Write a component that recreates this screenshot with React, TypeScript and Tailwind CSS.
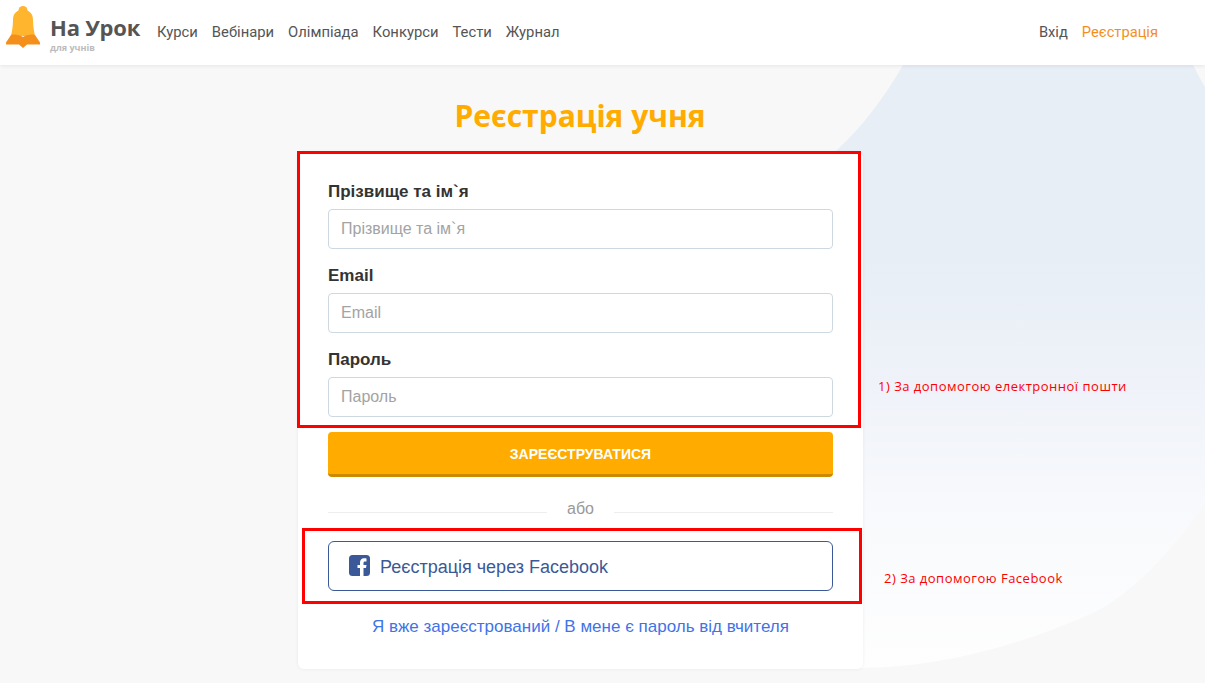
const navItems = ["Курси", "Вебінари", "Олімпіада", "Конкурси", "Тести", "Журнал"];

function Logo() {
  return (
    <svg width="36" height="42" viewBox="0 0 36 42" className="mt-[6px] shrink-0 self-start">
      <circle cx="18" cy="4.500" r="4.500" fill="#ffb52e" />
      <path d="M6 30 C7 25 8 20 8 14 C8 7 12 4 18 4 C24 4 28 7 28 14 C28 20 29 25 30 30 Z" fill="#ffb52e" />
      <path d="M1 36.500 L6 29 C10 28 15 29 18 31 C21 29 26 28 30 29 L35 36.500 L35 38.500 L22 38.500 L18 42 L14 38.500 L1 38.500 Z" fill="#f58f1c" />
    </svg>
  );
}

function Field({ label }: { label: string }) {
  return (
    <div className="flex flex-col">
      <label className="mb-[6px] text-[17px] leading-[23px] font-bold text-[#333333]">{label}</label>
      <input
        placeholder={label}
        className="h-10 w-full rounded-[4px] border border-[#ced8e0] bg-white px-3 text-[16px] text-[#333333] placeholder:text-[#a3a3a3] outline-none"
      />
    </div>
  );
}

export default function App() {
  return (
    <div className="relative h-[683px] w-[1205px] overflow-hidden bg-[#f8f8f8] font-['Liberation_Sans',sans-serif]">
      <svg className="absolute left-0 top-0" width="1205" height="683" viewBox="0 0 1205 683">
        <defs>
          <linearGradient id="blob" x1="0" y1="0" x2="0" y2="1">
            <stop offset="0" stopColor="#e7eef6" />
            <stop offset="0.32" stopColor="#e7eef6" />
            <stop offset="0.555" stopColor="#f0f3f9" />
            <stop offset="0.72" stopColor="#f7f9fc" />
            <stop offset="1" stopColor="#fefefe" />
          </linearGradient>
        </defs>
        <path d="M903 65 C884 98 862 127 837 150 L700 300 L700 668 L860 668 C930 668 1010 650 1093 613 C1135 592 1170 552 1205 505 L1205 87 C1200 79 1197 72 1193 65 Z" fill="url(#blob)" />
      </svg>

      <header className="relative flex h-[65px] items-center bg-white pl-[5px] pr-[47px] shadow-[0_1px_4px_rgba(0,0,0,0.08)]">
        <Logo />
        <div className="ml-[9px] flex w-[97px] flex-col pt-[3px]">
          <span className="font-['Open_Sans',sans-serif] text-[22px] leading-[24px] font-bold tracking-[-0.2px] text-[#555555]">На Урок</span>
          <span className="mt-[3px] font-['Open_Sans',sans-serif] text-[9px] leading-[12px] font-bold text-[#bbbbbb]">для учнів</span>
        </div>
        <nav className="ml-[10px] flex gap-[14px] font-['Roboto',sans-serif] text-[14.800px] text-[#555555]">
          {navItems.map((item) => (
            <a key={item}>{item}</a>
          ))}
        </nav>
        <div className="ml-auto flex gap-[14px] font-['Roboto',sans-serif] text-[14.700px]">
          <a className="text-[#555555]">Вхід</a>
          <a className="text-[#f58f1c]">Реєстрація</a>
        </div>
      </header>

      <main className="relative flex flex-col items-center">
        <h1 className="ml-[-45px] mt-[31px] font-['Open_Sans',sans-serif] text-[30px] leading-[40px] font-bold text-[#ffab00]">
          Реєстрація учня
        </h1>
        <div className="ml-[-44px] mt-[16px] flex h-[517px] w-[565px] flex-col rounded-[6px] bg-white px-[30px] pt-[28px] shadow-[0_0_4px_rgba(0,0,0,0.06)]">
          <div className="flex flex-col gap-[15px]">
            <Field label="Прізвище та ім`я" />
            <Field label="Email" />
            <Field label="Пароль" />
          </div>
          <button className="mt-[15px] h-[45px] w-full rounded-[4px] border-b-[3px] border-[#cc8a00] bg-[#ffab00] pt-[2px] text-[14px] font-bold text-white uppercase">
            Зареєструватися
          </button>
          <div className="mt-[23px] flex items-center">
            <div className="mt-[6px] h-px flex-1 bg-[#eeeeee]" />
            <span className="px-5 text-[16px] leading-[18px] text-[#999999]">або</span>
            <div className="mt-[6px] h-px flex-1 bg-[#eeeeee]" />
          </div>
          <button className="mt-[23px] flex h-[50px] w-full items-center gap-[10px] rounded-[6px] border border-[#3b5998] bg-white pl-5 pt-[2px] text-[18px] text-[#3b5998]">
            <svg width="21" height="21" viewBox="0 0 21 21" className="mt-[-4px]">
              <rect width="21" height="21" rx="3.500" fill="#3b5998" />
              <path d="M14.500 21 V13 H17 L17.500 10 H14.500 V8 C14.500 7 15 6.500 16 6.500 H17.500 V3.500 C17 3.400 16 3.300 15 3.300 C12.500 3.300 11 5 11 7.500 V10 H8.500 V13 H11 V21 Z" fill="#ffffff" />
            </svg>
            Реєстрація через Facebook
          </button>
          <a className="mt-[25px] text-center text-[17px] leading-[22px] text-[#3f73e8]">
            Я вже зареєстрований / В мене є пароль від вчителя
          </a>
        </div>
      </main>

      <div className="absolute left-[297px] top-[151px] h-[277px] w-[564px] border-[3px] border-[#ff0000]" />
      <div className="absolute left-[302px] top-[528px] h-[76px] w-[560px] border-[3px] border-[#ff0000]" />
      <span className="absolute left-[878px] top-[378px] font-['Open_Sans',sans-serif] text-[13px] leading-[16px] tracking-[0.5px] whitespace-nowrap text-[#ff0000]">
        1) За допомогою електронної пошти
      </span>
      <span className="absolute left-[884px] top-[570px] font-['Open_Sans',sans-serif] text-[13px] leading-[16px] tracking-[0.5px] whitespace-nowrap text-[#ff0000]">
        2) За допомогою Facebook
      </span>
    </div>
  );
}
